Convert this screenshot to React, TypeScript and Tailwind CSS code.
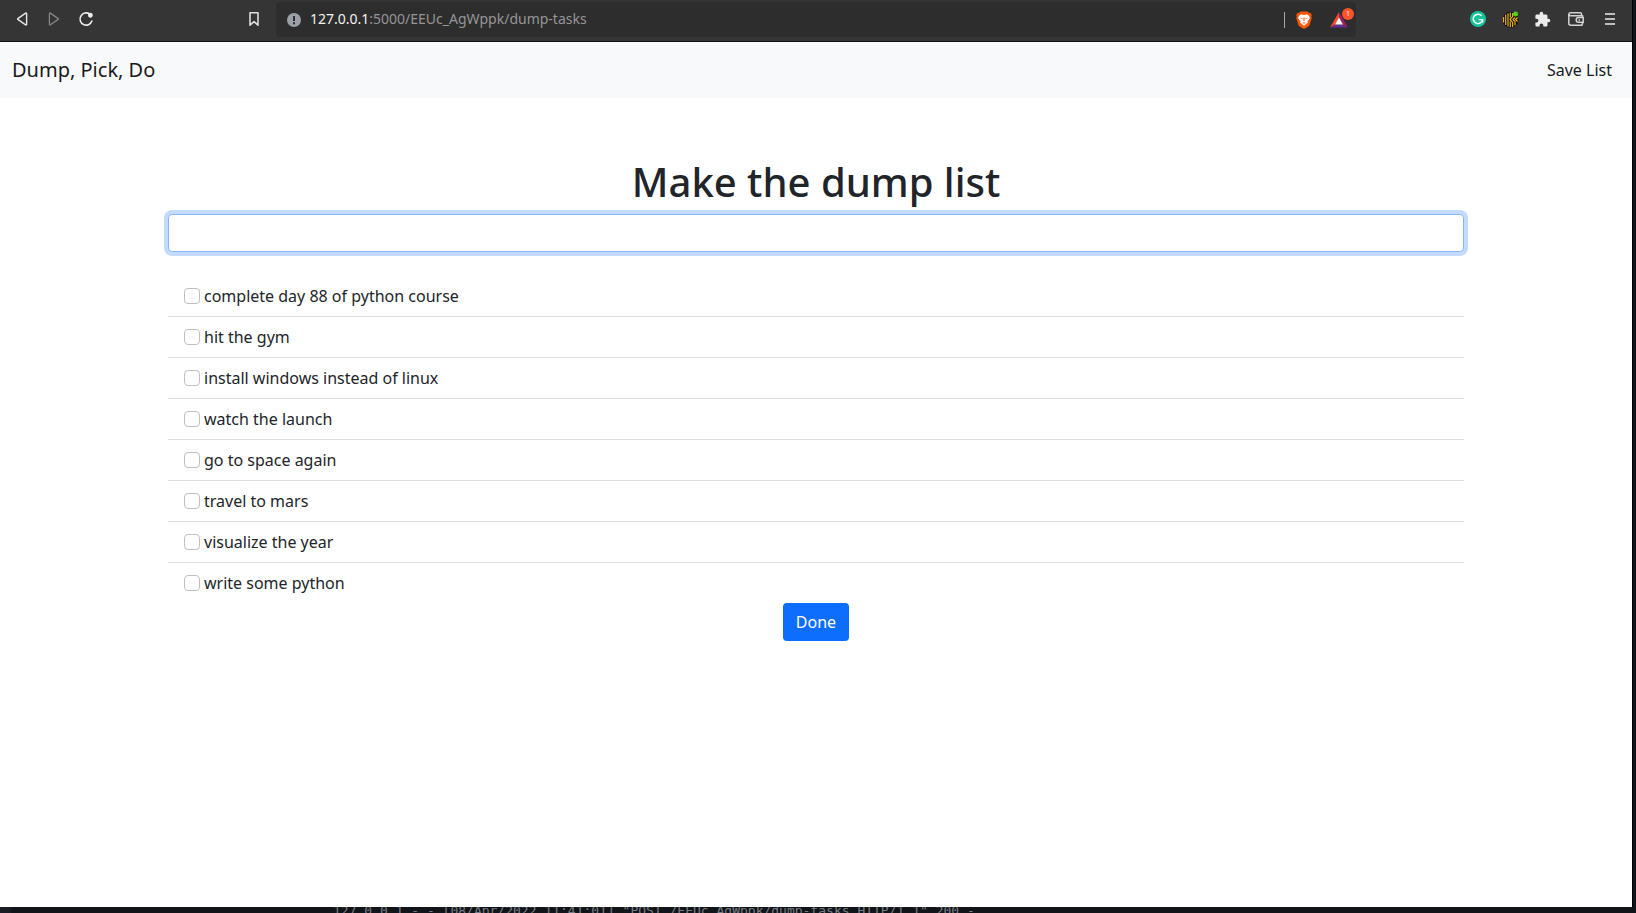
import { useState } from "react";
import type { FormEvent, ReactNode } from "react";

const initialTasks = [
  "complete day 88 of python course",
  "hit the gym",
  "install windows instead of linux",
  "watch the launch",
  "go to space again",
  "travel to mars",
  "visualize the year",
  "write some python",
];

function ToolButton({ label, children }: { label: string; children: ReactNode }) {
  return (
    <button type="button" aria-label={label} className="flex size-8 shrink-0 items-center justify-center">
      {children}
    </button>
  );
}

function BackIcon() {
  return (
    <svg width="16" height="16" viewBox="0 0 16 16" fill="none" stroke="#e6e6e6" strokeWidth="1.4" strokeLinejoin="round">
      <path d="M12.6 2.6v10.8a.6.6 0 0 1-1 .4L3.8 8.4a.5.5 0 0 1 0-.8l7.8-5.5a.6.6 0 0 1 1 .5z" />
    </svg>
  );
}

function ForwardIcon() {
  return (
    <svg width="16" height="16" viewBox="0 0 16 16" fill="none" stroke="#858585" strokeWidth="1.3" strokeLinejoin="round">
      <path d="M3.4 2.6v10.8a.6.6 0 0 0 1 .4l7.8-5.4a.5.5 0 0 0 0-.8L4.4 2.1a.6.6 0 0 0-1 .5z" />
    </svg>
  );
}

function ReloadIcon() {
  return (
    <svg width="16" height="16" viewBox="0 0 16 16" fill="none">
      <path d="M13.9 10.1A6.1 6.1 0 1 1 11.6 3" stroke="#ececec" strokeWidth="1.6" strokeLinecap="round" />
      <path d="M10 4.2c0-1.4 1-2.4 2.4-2.4s2.4 1 2.4 2.3-.9 2.6-2.2 2.6c-1.6 0-2.6-1-2.6-2.5z" fill="#ececec" />
    </svg>
  );
}

function BookmarkIcon() {
  return (
    <svg width="16" height="16" viewBox="0 0 16 16" fill="none" stroke="#dcdcdc" strokeWidth="1.6" strokeLinejoin="round">
      <path d="M4 1.8h8v12.4l-4-3.6-4 3.6z" />
    </svg>
  );
}

function SiteInfoIcon() {
  return (
    <svg width="14" height="14" viewBox="0 0 14 14">
      <circle cx="7" cy="7" r="7" fill="#9aa0a6" />
      <path d="M7 3v5" stroke="#2d2d2d" strokeWidth="2" />
      <path d="M7 9.3v2" stroke="#2d2d2d" strokeWidth="2" />
    </svg>
  );
}

function BraveIcon() {
  return (
    <svg width="16" height="18" viewBox="0 0 16 18">
      <path d="M4.6.4h6.8l1.5 1.5 1.3-.1 1.6 2.1-.6 1.5.5 1.5-1.9 6.7c-.3 1-.8 1.5-1.6 2.1L8.8 17.6c-.5.4-1.1.4-1.6 0l-3.4-1.9c-.8-.6-1.3-1.1-1.6-2.1L.3 6.9l.5-1.5L.2 3.9l1.6-2.1 1.3.1z" fill="#fb5607" />
      <path d="M5.8 3.5L8 3.9l2.200-.4 1.700.2 1.900 2.500-.4 1.800-2 2.500.4 1.300-1.100.8L8 14.800l-2.700-2.200-1.100-.8.4-1.300-2-2.500-.4-1.800 1.900-2.500z" fill="#fff" />
      <path d="M4 6.700l2.600.6-.6 1zM12 6.700l-2.600.6.6 1z" fill="#fb5607" />
      <path d="M7.400 6.200h1.200l.5 3.300L8 10.300l-1.100-.8zM6 11.600l2-.8 2 .8-2 1.300z" fill="#fb5607" opacity=".6" />
    </svg>
  );
}

function RewardsIcon() {
  return (
    <svg width="18" height="16" viewBox="0 0 18 16">
      <path d="M9 0L0 15.600l5.200-3L9 6z" fill="#ff4724" />
      <path d="M9 0l9 15.600-5.200-3L9 6z" fill="#9e1f63" />
      <path d="M0 15.600l5.200-3h7.600l5.200 3z" fill="#662d91" />
      <path d="M9 5.600l4 7H5z" fill="#fff" />
    </svg>
  );
}

function GrammarIcon() {
  return (
    <svg width="16" height="16" viewBox="0 0 16 16" fill="none">
      <circle cx="8" cy="8" r="8" fill="#15c39a" />
      <path d="M11.600 4.800A4.700 4.700 0 1 0 12.600 8.900" stroke="#fff" strokeWidth="1.500" />
      <path d="M8.600 8.600h4v2.900" stroke="#fff" strokeWidth="1.400" />
    </svg>
  );
}

function KeeperIcon() {
  return (
    <svg width="17" height="17" viewBox="0 0 17 17" fill="none">
      <circle cx="8.500" cy="8.800" r="8" fill="#0e0e0c" />
      <path
        d="M1.500 6v5.500M3.700 3.500v10.600M6 2.200v13.200M8.300 1.600v5M8.300 10.500v5.800M10.600 2v3.600L8 8.500l2.600 2.900v4.500M13 6.500l-2 2 2 2v4M15.600 6.500l-2 2 2 2"
        stroke="#e8b21c"
        strokeWidth="1.200"
      />
      <circle cx="13.500" cy="3" r="2.500" fill="#4cd41c" />
    </svg>
  );
}

function PuzzleIcon() {
  return (
    <svg width="17" height="17" viewBox="0 0 24 24" fill="#ececec">
      <path d="M20.500 11H19V7c0-1.100-.9-2-2-2h-4V3.500a2.500 2.500 0 0 0-5 0V5H4c-1.100 0-2 .9-2 2v3.800h1.500a2.700 2.700 0 0 1 0 5.400H2V20c0 1.100.9 2 2 2h3.800v-1.500a2.700 2.700 0 0 1 5.400 0V22H17c1.100 0 2-.9 2-2v-4h1.500a2.500 2.500 0 0 0 0-5z" />
    </svg>
  );
}

function WalletIcon() {
  return (
    <svg width="16" height="14" viewBox="0 0 16 14" fill="none" stroke="#d2d2d2" strokeWidth="1.500">
      <path d="M14.500 5.200V3.800H2.400a1.500 1.500 0 0 1 0-3h9.800c.8 0 1.300.5 1.300 1.200v1.500" />
      <path d="M.8 2v9.300c0 1.100.8 1.900 1.900 1.900h10.100c1.100 0 1.700-.7 1.700-1.800v-1" />
      <path d="M15.200 5.600h-4.700a2.300 2.300 0 0 0 0 4.600h4.700z" />
      <path d="M10.500 7.900h1.500" />
    </svg>
  );
}

function MenuIcon() {
  return (
    <svg width="10" height="12" viewBox="0 0 10 12" stroke="#bcbfbc" strokeWidth="2">
      <path d="M0 1h10M0 6h10M0 11h10" />
    </svg>
  );
}

function BrowserToolbar() {
  return (
    <header className="flex h-[42px] shrink-0 items-start border-b border-[#111] bg-[#353535] px-1.5">
      <div className="flex h-[37px] items-center pt-px">
        <ToolButton label="Back"><BackIcon /></ToolButton>
        <ToolButton label="Forward"><ForwardIcon /></ToolButton>
        <ToolButton label="Reload"><ReloadIcon /></ToolButton>
      </div>
      <div className="ml-[136px] flex h-[37px] items-center pt-px">
        <ToolButton label="Bookmark this page"><BookmarkIcon /></ToolButton>
      </div>
      <div className="mt-0.5 mr-[106px] ml-1.5 flex h-[35px] flex-1 items-center rounded-sm bg-[#2d2d2d] pr-0.5 pl-[11px]">
        <SiteInfoIcon />
        <div role="textbox" aria-label="Address" className="ml-[9px] flex-1 pb-0.5 text-sm text-[#969696]">
          <span className="text-[#f2f2f2]">127.0.0.1</span>:5000/EEUc_AgWppk/dump-tasks
        </div>
        <span className="mr-[11px] h-4 w-px bg-[#a8a8a8]" />
        <button type="button" aria-label="Shields"><BraveIcon /></button>
        <button type="button" aria-label="Rewards" className="relative ml-[18px] pr-1.5">
          <RewardsIcon />
          <span className="absolute -top-1 right-0 flex size-3 items-center justify-center rounded-full bg-[#fb542b] text-[7px] leading-none text-white">
            1
          </span>
        </button>
      </div>
      <div className="flex h-[37px] items-center pt-px">
        <ToolButton label="Writing assistant"><GrammarIcon /></ToolButton>
        <ToolButton label="Password manager"><KeeperIcon /></ToolButton>
        <ToolButton label="Extensions"><PuzzleIcon /></ToolButton>
      </div>
      <div className="ml-0.5 flex h-[37px] items-center gap-0.5 pt-px">
        <ToolButton label="Wallet"><WalletIcon /></ToolButton>
        <ToolButton label="Menu"><MenuIcon /></ToolButton>
      </div>
    </header>
  );
}

export default function App() {
  const [tasks, setTasks] = useState(initialTasks);
  const [draft, setDraft] = useState("");

  const addTask = (event: FormEvent) => {
    event.preventDefault();
    if (draft.trim()) {
      setTasks([...tasks, draft.trim()]);
      setDraft("");
    }
  };

  return (
    <div className="flex h-screen flex-col bg-[#111418] font-['Noto_Sans',sans-serif] text-base text-[#212529]">
      <div className="mr-[3px] flex min-h-0 flex-1 flex-col border-r border-black bg-white">
        <BrowserToolbar />
        <nav className="flex h-14 shrink-0 items-center justify-between bg-[#f8f9fa] pr-5 pl-3">
          <a href="#home" className="text-xl text-[#1a1a1a]">Dump, Pick, Do</a>
          <a href="#save" className="text-[#1a1a1a]">Save List</a>
        </nav>
        <main className="mx-auto w-full max-w-[1320px] flex-1 overflow-hidden px-3 pt-[60px]">
          <h1 className="mb-2 text-center text-[40px] leading-[48px] font-medium">Make the dump list</h1>
          <form onSubmit={addTask}>
            <input
              type="text"
              aria-label="New task"
              value={draft}
              onChange={(event) => setDraft(event.target.value)}
              className="block h-[38px] w-full rounded border border-[#86b7fe] bg-white px-3 ring-4 ring-[#c2dbfe] outline-none"
            />
          </form>
          <ul className="mt-6 divide-y divide-[#dfdfdf]">
            {tasks.map((task) => (
              <li key={task} className="px-4 py-2">
                <label className="flex items-center gap-1">
                  <input
                    type="checkbox"
                    className="size-4 appearance-none rounded border border-[#bfbfbf] bg-white checked:border-[#0d6efd] checked:bg-[#0d6efd]"
                  />
                  {task}
                </label>
              </li>
            ))}
          </ul>
          <div className="flex justify-center">
            <button type="button" className="h-[38px] rounded bg-[#0d6efd] px-[13px] text-white">Done</button>
          </div>
        </main>
      </div>
      <footer className="flex h-1.5 shrink-0 items-start overflow-hidden border-l-[11px] border-[#1b1d26] pl-[322px]">
        <span className="-mt-1 font-['DejaVu_Sans_Mono',monospace] text-[13px] leading-4 whitespace-nowrap text-[#767c85]">
          127.0.0.1 - - [08/Apr/2022 11:41:01] "POST /EEUc_AgWppk/dump-tasks HTTP/1.1" 200 -
        </span>
      </footer>
    </div>
  );
}
